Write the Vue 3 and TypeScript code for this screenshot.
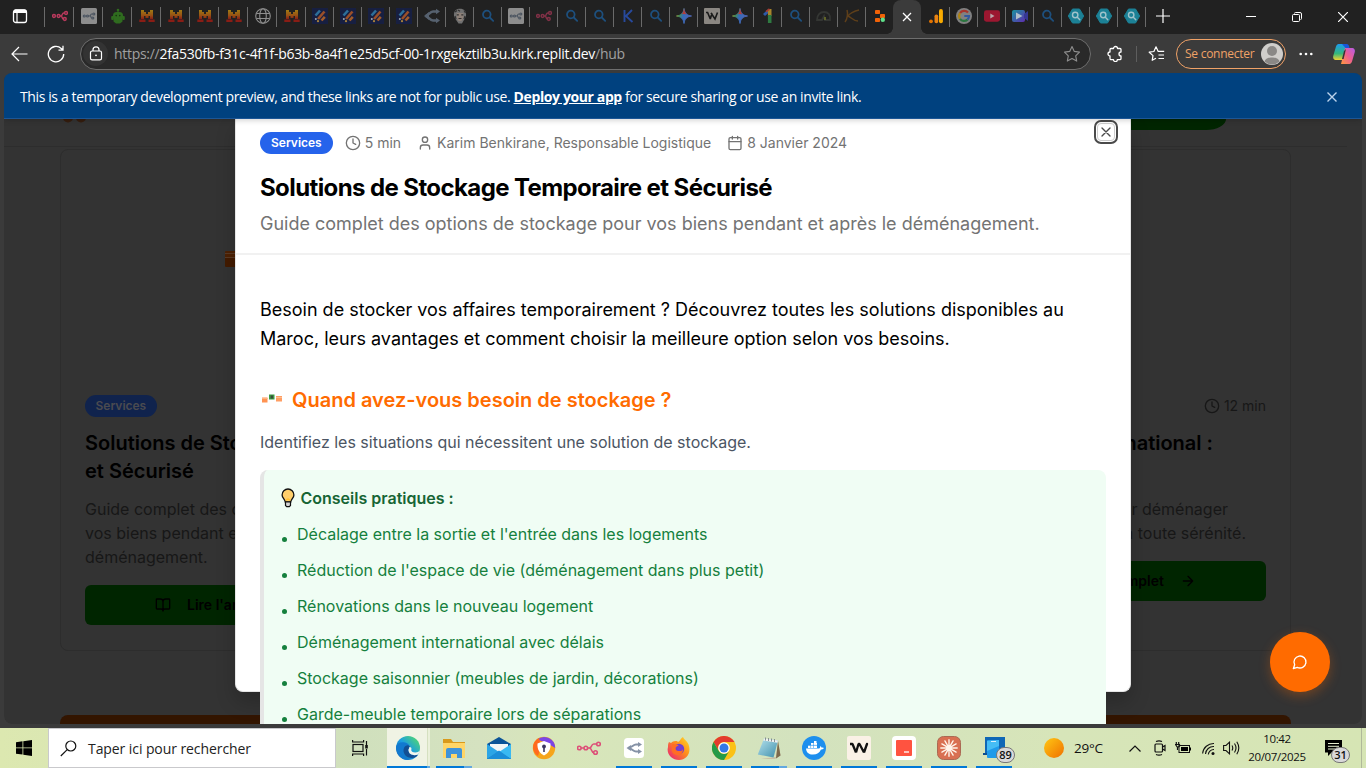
<script setup lang="ts">
interface Tab {
  icon: string
  dim?: number
  wide?: boolean
  bare?: boolean
}

const t = (icon: string, dim = 1, wide = false): Tab => ({ icon, dim, wide })

const tabsBefore: Tab[] = [
  t('n8n', 0.8, true),
  t('n8n-box', 1, true),
  t('robot', 1, true),
  t('mistral', 0.85, true),
  t('mistral', 0.85, true),
  t('mistral', 0.85, true),
  t('mistral', 0.85, true),
  t('globe', 1, true),
  t('mistral', 0.85, true),
  t('pens', 0.9),
  t('pens', 0.9),
  t('pens', 0.9),
  t('pens', 0.9),
  t('fork'),
  t('face', 0.8),
  t('search'),
  t('n8n-box'),
  t('n8n', 0.5),
  t('search'),
  t('search'),
  t('letter-k'),
  t('search'),
  t('spark', 0.8),
  t('wave-tab'),
  t('spark', 0.8),
  t('one'),
  t('search'),
  t('dome'),
  t('kimi'),
  t('replit'),
]
const tabsAfter: Tab[] = [
  { icon: 'analytics', bare: true },
  t('google', 0.8),
  t('youtube'),
  t('video', 0.85),
  t('search'),
  t('hex'),
  t('hex'),
  t('hex'),
]

const tips: string[] = [
  "Décalage entre la sortie et l'entrée dans les logements",
  "Réduction de l'espace de vie (déménagement dans plus petit)",
  'Rénovations dans le nouveau logement',
  'Déménagement international avec délais',
  'Stockage saisonnier (meubles de jardin, décorations)',
  'Garde-meuble temporaire lors de séparations',
]

interface App {
  icon: string
  open?: boolean
  multi?: boolean
  active?: boolean
  badge?: string
}
const apps: App[] = [
  { icon: 'edge', open: true, multi: true, active: true },
  { icon: 'folder', open: true, multi: true },
  { icon: 'mail' },
  { icon: 'shield' },
  { icon: 'n8n-big' },
  { icon: 'fork-app', open: true },
  { icon: 'firefox', open: true },
  { icon: 'chrome', open: true },
  { icon: 'notepad', open: true, multi: true },
  { icon: 'docker', open: true },
  { icon: 'wave-app', open: true },
  { icon: 'red-app', open: true },
  { icon: 'claude', open: true },
  { icon: 'phone', open: true, badge: '89' },
]
</script>

<template>
  <svg class="defs" width="0" height="0">
    <defs>
      <linearGradient id="g-mi" x1="0" y1="0" x2="0" y2="1">
        <stop offset="0" stop-color="#b58a12" /><stop offset=".6" stop-color="#ad5a12" /><stop offset="1" stop-color="#9c1d14" />
      </linearGradient>
      <linearGradient id="g-edge" x1="0" y1="1" x2="1" y2="0">
        <stop offset="0" stop-color="#0c59a4" /><stop offset=".5" stop-color="#1b9de2" /><stop offset="1" stop-color="#5be35a" />
      </linearGradient>
      <linearGradient id="g-ff" x1="1" y1="0" x2="0" y2="1">
        <stop offset="0" stop-color="#ffe226" /><stop offset=".45" stop-color="#ff8a1e" /><stop offset="1" stop-color="#e8177f" />
      </linearGradient>
      <linearGradient id="g-spark" x1="0" y1="0" x2="1" y2=".3">
        <stop offset="0" stop-color="#d9b52b" /><stop offset=".3" stop-color="#4fa868" /><stop offset=".55" stop-color="#3b7de0" /><stop offset="1" stop-color="#5a78d8" />
      </linearGradient>
      <linearGradient id="g-sun" x1="0" y1="0" x2="1" y2="1">
        <stop offset="0" stop-color="#ffc814" /><stop offset="1" stop-color="#f07000" />
      </linearGradient>
      <linearGradient id="g-cop1" x1="0" y1="0" x2="0" y2="1">
        <stop offset="0" stop-color="#1c9bf0" /><stop offset=".6" stop-color="#35b77a" /><stop offset="1" stop-color="#f2d233" />
      </linearGradient>
      <linearGradient id="g-cop2" x1="1" y1="0" x2="0" y2="1">
        <stop offset="0" stop-color="#b45be8" /><stop offset=".5" stop-color="#ee5f8f" /><stop offset="1" stop-color="#ff9a3c" />
      </linearGradient>
      <linearGradient id="g-video" x1="0" y1="0" x2="1" y2="1">
        <stop offset="0" stop-color="#17a9b5" /><stop offset="1" stop-color="#6a2fc9" />
      </linearGradient>
      <linearGradient id="g-note" x1="0" y1="0" x2="1" y2="1">
        <stop offset="0" stop-color="#b7e3ee" /><stop offset="1" stop-color="#3f8fab" />
      </linearGradient>
    </defs>
    <symbol id="n8n" viewBox="0 0 16 16">
      <g fill="none" stroke="#e0406c" stroke-width="1.500">
        <circle cx="2" cy="8" r="1.400" /><circle cx="6.600" cy="8" r="1.400" /><circle cx="14" cy="5" r="1.400" /><circle cx="12.800" cy="11" r="1.400" />
        <path d="M8 8h1c1.500 0 1-3 2.800-3h.8M9 8c1.400 0 .9 3 2.400 3" />
      </g>
    </symbol>
    <symbol id="n8n-box" viewBox="0 0 16 16">
      <rect width="16" height="16" rx="1.500" fill="#8d8d8d" />
      <g fill="none" stroke="#4c5561" stroke-width="1.200">
        <circle cx="3.300" cy="8" r="1" /><circle cx="6.500" cy="8" r="1" /><circle cx="12.800" cy="6" r="1" /><circle cx="11.800" cy="10" r="1" />
        <path d="M7.500 8h1c1.300 0 1-2 2.200-2h1M9 8c1.200 0 .8 2 1.800 2" />
      </g>
    </symbol>
    <symbol id="robot" viewBox="0 0 16 16">
      <g fill="#2f6b1f"><circle cx="8" cy="2" r="1.300" /><path d="M7.400 2h1.200v3H7.400z" /><rect x="3" y="4" width="10" height="8.500" rx="3.500" /><rect x="1.200" y="8" width="2.500" height="4" rx="1" /><rect x="12.300" y="8" width="2.500" height="4" rx="1" /><path d="M3.500 11h9v2.500L10 15.500H6l-2.500-2z" /></g>
      <circle cx="6.200" cy="7.600" r=".8" fill="#17300f" /><circle cx="9.800" cy="7.600" r=".8" fill="#17300f" />
    </symbol>
    <symbol id="mistral" viewBox="0 0 16 16">
      <path d="M2 2h3v2h2v2h2V4h2V2h3v9h-3V8H9.500v2h-3V8H5v3H2z" fill="url(#g-mi)" />
      <path d="M.300 11.500h6.200v2.500H.300zM9.500 11.500h6.200v2.500H9.500z" fill="#9c1d14" />
    </symbol>
    <symbol id="globe" viewBox="0 0 16 16">
      <g fill="none" stroke="#8e8e8e" stroke-width="1.100"><circle cx="8" cy="8" r="7.300" /><ellipse cx="8" cy="8" rx="3.300" ry="7.300" /><path d="M1.500 5.500h13M1.500 10.500h13" /></g>
    </symbol>
    <symbol id="pens" viewBox="0 0 16 16">
      <rect width="16" height="16" fill="#171f45" />
      <g stroke-width="2.600" stroke-linecap="butt"><path d="M3.500 7.500L8 2.500" stroke="#2f78a8" /><path d="M6 11L12.500 3.500" stroke="#a8542a" /><path d="M9.500 12.500L12.800 8.800" stroke="#b0622c" /></g>
      <circle cx="3.800" cy="11" r="1" fill="#a9b4c4" /><circle cx="6" cy="13.200" r="1.100" fill="#b98f3e" />
    </symbol>
    <symbol id="fork" viewBox="0 0 16 16">
      <path d="M14 3.500H9C6 3.500 4 8 1.500 8 4 8 6 12.500 9 12.500h5" fill="none" stroke="#56616f" stroke-width="2.600" />
      <path d="M0 8l5-4v8zM12 .8l4 2.700-4 2.700zM12 9.800l4 2.700-4 2.700z" fill="#56616f" />
    </symbol>
    <symbol id="face" viewBox="0 0 16 16">
      <path d="M2 8C1.500 3 4 .8 8 .8S14.500 3 14 8l-1.500 3L10 15.500H6.500L3.500 11z" fill="#858585" />
      <path d="M4.800 5h6.600v4.500L9.500 13h-3L4.800 9.500z" fill="#a8988e" />
      <path d="M4.800 6.800h2M9.300 6.800h2M6.500 10.500h3M3 4l2-1.500M12 2.500L13.500 5M6 2l2 1.200M3 8l1 3M13 8l-1 3" stroke="#333" stroke-width="1.200" fill="none" />
    </symbol>
    <symbol id="search" viewBox="0 0 16 16">
      <g fill="none" stroke="#1d4f7d" stroke-width="1.800" stroke-linecap="round"><circle cx="6.800" cy="6.500" r="3.800" /><path d="M9.800 9.500l3.400 3.300" /></g>
    </symbol>
    <symbol id="letter-k" viewBox="0 0 16 16">
      <path d="M4.500 2v12M12 2L6 8l6.500 6" fill="none" stroke="#27499c" stroke-width="1.900" />
    </symbol>
    <symbol id="spark" viewBox="0 0 16 16">
      <path d="M8 .500C8.500 5 11 7.500 15.500 8 11 8.500 8.500 11 8 15.500 7.500 11 5 8.500.500 8 5 7.500 7.500 5 8 .500z" fill="url(#g-spark)" stroke="url(#g-spark)" />
      <path d="M8 0C8.600 3.500 9.300 5 10.500 6.200L5.800 6C7 5 7.500 3.500 8 0z" fill="#d6453d" />
    </symbol>
    <symbol id="wave-tab" viewBox="0 0 16 16">
      <rect width="16" height="16" rx="1" fill="#8b8782" /><path d="M2 4.500h1.600L6.300 11M7 5l4 6 2.500-6.500M6.300 11L8 5" fill="none" stroke="#1a1a1a" stroke-width="1.600" />
    </symbol>
    <symbol id="one" viewBox="0 0 16 16">
      <path d="M4 7l5.500-5" stroke="#2d5aa8" stroke-width="3" /><path d="M9.700 1v7" stroke="#a8852b" stroke-width="3.600" /><path d="M9.700 7v8" stroke="#2f7a41" stroke-width="3.600" /><path d="M6 3.700L9.500 1" stroke="#a83a33" stroke-width="1.600" />
    </symbol>
    <symbol id="dome" viewBox="0 0 16 16">
      <path d="M1 12c0-5 3-8 7-8s7 3 6 8H9l-1-4-2 4z" fill="none" stroke="#343633" stroke-width="1.800" /><path d="M9 9v3" stroke="#6f7424" stroke-width="1.500" />
    </symbol>
    <symbol id="kimi" viewBox="0 0 16 16">
      <path d="M3 2c1 3 .500 9-2 12M15 2C10 3 5 6 4 8c3 1 5 5 10 5" fill="none" stroke="#5e3f1a" stroke-width="1.500" />
    </symbol>
    <symbol id="replit" viewBox="0 0 16 16">
      <g fill="#f26207"><rect x="3" y="2" width="5" height="4" rx=".8" /><rect x="8" y="6" width="5" height="4" rx=".8" /><rect x="3" y="10" width="5" height="4" rx=".8" /></g><circle cx="10.800" cy="11.800" r="2.200" fill="#5fe08a" />
    </symbol>
    <symbol id="analytics" viewBox="0 0 16 16">
      <circle cx="3" cy="13.300" r="1.900" fill="#e37400" /><rect x="6.500" y="6.500" width="3.700" height="8.700" rx="1.800" fill="#e98212" /><rect x="11" y="1" width="3.900" height="14.200" rx="1.900" fill="#f9ab00" />
    </symbol>
    <symbol id="google" viewBox="0 0 16 16">
      <circle cx="8" cy="8" r="8" fill="#999" />
      <g fill="none" stroke-width="2.200"><path d="M12 4.500A5 5 0 0 0 4 5.200" stroke="#c93a2f" /><path d="M4 5.200a5 5 0 0 0 0 5.600" stroke="#cf9c12" /><path d="M4 10.800a5 5 0 0 0 7.500.800" stroke="#2f8c48" /><path d="M11.500 11.600A5 5 0 0 0 13 8H8.300" stroke="#3568bd" /></g>
    </symbol>
    <symbol id="youtube" viewBox="0 0 16 16">
      <rect y="2.300" width="16" height="11.400" rx="2.400" fill="#9c1730" /><path d="M6.300 5.600v4.800L10.500 8z" fill="#b9a6aa" />
    </symbol>
    <symbol id="video" viewBox="0 0 16 16">
      <rect y="2" width="13" height="12" rx="2" fill="url(#g-video)" /><path d="M12 6l4-3v10l-4-3z" fill="#3b3ba8" /><path d="M4 4.500v7L10.500 8z" fill="#c9dce8" />
    </symbol>
    <symbol id="hex" viewBox="0 0 16 16">
      <path d="M4.500 1h7L15.700 8l-4.200 7h-7L.3 8z" fill="#1c8196" stroke="#1c8196" stroke-linejoin="round" /><g fill="none" stroke="#9fc3cb" stroke-width="1.400" stroke-linecap="round"><circle cx="7.200" cy="7" r="2.700" /><path d="M9.300 9.200l2.500 2.600" /></g>
    </symbol>

    <symbol id="clock" viewBox="0 0 24 24"><g fill="none" stroke="currentColor" stroke-width="2" stroke-linecap="round" stroke-linejoin="round"><circle cx="12" cy="12" r="10" /><path d="M12 6v6l4 2" /></g></symbol>
    <symbol id="user" viewBox="0 0 24 24"><g fill="none" stroke="currentColor" stroke-width="2" stroke-linecap="round" stroke-linejoin="round"><path d="M19 21v-2a4 4 0 0 0-4-4H9a4 4 0 0 0-4 4v2" /><circle cx="12" cy="7" r="4" /></g></symbol>
    <symbol id="calendar" viewBox="0 0 24 24"><g fill="none" stroke="currentColor" stroke-width="2" stroke-linecap="round" stroke-linejoin="round"><path d="M8 2v4M16 2v4M3 10h18" /><rect x="3" y="4" width="18" height="18" rx="2" /></g></symbol>
    <symbol id="book" viewBox="0 0 24 24"><g fill="none" stroke="currentColor" stroke-width="2" stroke-linecap="round" stroke-linejoin="round"><path d="M12 7v14M3 18a1 1 0 0 1-1-1V4a1 1 0 0 1 1-1h5a4 4 0 0 1 4 4 4 4 0 0 1 4-4h5a1 1 0 0 1 1 1v13a1 1 0 0 1-1 1h-6a3 3 0 0 0-3 3 3 3 0 0 0-3-3z" /></g></symbol>
    <symbol id="arrow" viewBox="0 0 24 24"><path d="M5 12h14M12 5l7 7-7 7" fill="none" stroke="currentColor" stroke-width="2" stroke-linecap="round" stroke-linejoin="round" /></symbol>
    <symbol id="cross" viewBox="0 0 24 24"><path d="M18 6L6 18M6 6l12 12" fill="none" stroke="currentColor" stroke-width="2" stroke-linecap="round" /></symbol>
    <symbol id="chat" viewBox="0 0 24 24"><path d="M7.900 20A9 9 0 1 0 4 16.100L2 22z" fill="none" stroke="currentColor" stroke-width="2" stroke-linecap="round" stroke-linejoin="round" /></symbol>

    <symbol id="edge" viewBox="0 0 24 24">
      <circle cx="12" cy="12" r="12" fill="url(#g-edge)" />
      <path d="M.100 11C1 7 5 5.500 9 6.500c4 1 5.500 4 4.500 6.500-2-2-6-1-6 3 0 4 3 7 6.500 7.800C6 25 0 19 .100 11z" fill="#1279cf" />
      <path d="M8 12c-2 5 2 10 8 10 3 0 5-1.500 6-3.500-4 1.500-9 .500-9.500-4C12.300 12.500 14 12 13.500 10 12 8.500 9 9.500 8 12z" fill="#124f94" />
      <path d="M12.500 14.500c-.500-1 1-2 .800-3.500 2 0 2.500 1 2 2.500-.500 2 1.500 3 4 3 2 0 3.500-.800 4.500-2-.400 2-1 3.200-1.800 4-4 1.500-9 .500-9.500-4z" fill="#f2f7ee" />
    </symbol>
    <symbol id="folder" viewBox="0 0 24 24">
      <path d="M1 3h8l2 3h12v16H1z" fill="#d99a1c" /><path d="M1 7h22v15H1z" fill="#ffd567" /><path d="M4 22v-8a2 2 0 0 1 2-2h12a2 2 0 0 1 2 2v8h-5v-4H9v4z" fill="#3f93d9" />
    </symbol>
    <symbol id="mail" viewBox="0 0 24 24">
      <path d="M0 8l12-7 12 7v15H0z" fill="#0a5398" /><path d="M3 8h18v9H3z" fill="#f1f5f7" /><path d="M0 8l12 8-12 7z" fill="#2ba5e6" /><path d="M24 8l-12 8 12 7z" fill="#39b9f2" /><path d="M0 23l12-8.500L24 23z" fill="#1b8ed8" />
    </symbol>
    <symbol id="shield" viewBox="0 0 24 24">
      <circle cx="12" cy="12" r="11.200" fill="#f6a51b" /><path d="M5 3.500A11.200 11.200 0 0 1 23.200 12L15 7z" fill="#7b45e6" /><path d="M1 12a11 11 0 0 1 6-10l2 8-3 10a11 11 0 0 1-5-8z" fill="#ff6a1f" /><path d="M12 5l6.500 2.500c.5 6-2 9.500-6.500 12-4.500-2.500-7-6-6.500-12z" fill="#fff" /><circle cx="12" cy="10.500" r="1.900" fill="#3b3660" /><path d="M11.200 11h1.600v5h-1.600z" fill="#3b3660" />
    </symbol>
    <symbol id="n8n-big" viewBox="0 0 24 24">
      <g fill="none" stroke="#dd5078" stroke-width="1.600"><circle cx="2.300" cy="12" r="1.800" /><circle cx="8.800" cy="12" r="1.800" /><circle cx="21.500" cy="8" r="1.800" /><circle cx="18.500" cy="16.500" r="1.800" /><path d="M4 12h3M10.600 12h1.700c3 0 1.500-4 4.500-4h3M12.300 12c3 0 1.500 4.500 4.500 4.500" /></g>
    </symbol>
    <symbol id="fork-app" viewBox="0 0 24 24">
      <rect x="2" y="2" width="20" height="20" rx="3.500" fill="#fff" /><path d="M17 8.500h-3c-3 0-4 3.500-8 3.500 4 0 5 3.500 8 3.500h3" fill="none" stroke="#8592a6" stroke-width="2" /><path d="M4.500 12L9 9v6zM16 6l4 2.500L16 11zM16 13l4 2.500-4 2.500z" fill="#8592a6" />
    </symbol>
    <symbol id="firefox" viewBox="0 0 24 24">
      <path d="M2 6l2 1c2-2 4-2 6-2l1 1c2-1 3-4 5-5 1 3 5 4 6 9 2 8-3 14-10 14S-1 18 1 11c0-2 0-3 1-5z" fill="url(#g-ff)" /><circle cx="12" cy="13" r="5.200" fill="#6c3fd2" /><path d="M5 8c2 0 5 0 7 2-3 0-4 2-3 4 2 2 5 1 7-1 0 5-3 7-6 6-4 0-6-4-5-7z" fill="#ff6d24" /><circle cx="13" cy="12.300" r="2.800" fill="#763fd0" />
    </symbol>
    <symbol id="chrome" viewBox="0 0 24 24">
      <circle cx="12" cy="12" r="12" fill="#fbc116" /><path d="M1.600 6A12 12 0 0 1 22.400 6H12a6 6 0 0 0-5.200 9z" fill="#e33b2e" /><path d="M1.600 6A12 12 0 0 0 12 24l5.200-9A6 6 0 0 1 6.800 15z" fill="#249a48" /><circle cx="12" cy="12" r="5.800" fill="#fff" /><circle cx="12" cy="12" r="4.500" fill="#3478e5" />
    </symbol>
    <symbol id="notepad" viewBox="0 0 24 24">
      <path d="M21 5l2.500 14.500L18 23H4l15-2z" fill="#c8bfa4" /><path d="M21 5l2.500 14.500L19 22.500z" fill="#7c6a4c" /><path d="M7 2.500l14 2-4.500 17L.800 18.500z" fill="url(#g-note)" /><path d="M7 2.500l14 2-.600 2.200L6.200 4.500z" fill="#f0f2f0" /><path d="M8.500 1.500v3M11.500 2v3M14.500 2.500v3M17.500 3v3" stroke="#707a80" stroke-width=".8" />
    </symbol>
    <symbol id="docker" viewBox="0 0 24 24">
      <circle cx="12" cy="12" r="12" fill="#1d8fee" /><path d="M4 12.500h13c1 0 1.300-1 1-2.500 1 .5 1.500 1 1.700 1.700 1-.2 1.800 0 2.300.4-.8 1.200-2 1.500-3 1.500-1.500 3.300-4 5-8 5-4.500 0-6.800-2.500-7-6.100z" fill="#fff" /><path d="M6 9.500h9v2.500H6zM9 7h6v2.200H9zM12 5h2.500v2H12z" fill="#fff" /><path d="M8.600 9.500v2.500M11.500 7v5M6 9.300h9" stroke="#1d8fee" stroke-width=".5" />
    </symbol>
    <symbol id="wave-app" viewBox="0 0 24 24">
      <rect width="24" height="24" rx="2" fill="#faf1e6" /><path d="M3 8h2.500L9 16.500M9 16.500L11.500 8h1L17 16.500M17 16.500l2.800-8" fill="none" stroke="#111" stroke-width="2.300" stroke-linejoin="bevel" /><circle cx="20" cy="8" r="1.200" fill="#111" />
    </symbol>
    <symbol id="red-app" viewBox="0 0 24 24">
      <rect width="24" height="24" rx="4" fill="#fff" /><rect x="4" y="4" width="16" height="16" rx="1" fill="#ff5340" /><path d="M12 16h5" stroke="#fff" stroke-width="1.300" />
    </symbol>
    <symbol id="claude" viewBox="0 0 24 24">
      <rect x=".5" y=".5" width="23" height="23" rx="6" fill="#d97052" stroke="#aa6a54" /><g stroke="#fff4ea" stroke-width="1.400" stroke-linecap="round"><path d="M12 3.800v16.400M3.800 12h16.400M7.900 4.900l8.200 14.200M16.100 4.900L7.900 19.100M4.900 7.900l14.200 8.200M4.900 16.100l14.200-8.200" /></g>
    </symbol>
    <symbol id="phone" viewBox="0 0 24 24">
      <path d="M3 1h20v18H3z" fill="#0f67b6" /><path d="M1 17h9v2H1z" fill="#0e4e8e" /><rect x="5" y="4" width="12" height="18" rx="1" fill="#1f9bea" /><path d="M5 5l12-1v6L5 15z" fill="#45bdf5" /><path d="M9 5.500h5" stroke="#d9f0fc" />
    </symbol>
  </svg>

  <div class="screen">
    <header class="tabstrip">
      <div class="workspace">
        <svg width="16" height="16" viewBox="0 0 16 16"><rect x="1.500" y="2" width="13" height="12.500" rx="2.300" fill="none" stroke="#fff" stroke-width="1.300" /><path d="M1.500 3.500a2 2 0 0 1 2-2h9a2 2 0 0 1 2 2V5h-13z" fill="#fff" /><path d="M5 5v9.500" stroke="#fff" stroke-width="1.200" /></svg>
      </div>
      <div v-for="(tab, i) in tabsBefore" :key="'b' + i" class="tab" :class="{ wide: tab.wide }">
        <svg width="16" height="16" :style="{ opacity: tab.dim }"><use :href="'#' + tab.icon" /></svg>
      </div>
      <div class="tab-active">
        <svg width="10" height="10" viewBox="0 0 10 10"><path d="M1 1l8 8M9 1L1 9" stroke="#fff" stroke-width="1.300" /></svg>
      </div>
      <div v-for="(tab, i) in tabsAfter" :key="'a' + i" class="tab" :class="{ bare: tab.bare }">
        <svg width="16" height="16" :style="{ opacity: tab.dim }"><use :href="'#' + tab.icon" /></svg>
      </div>
      <div class="newtab">
        <svg width="14" height="14" viewBox="0 0 14 14"><path d="M7 0v14M0 7h14" stroke="#fff" stroke-width="1.200" /></svg>
      </div>
      <div class="winctl">
        <svg width="10" height="10" viewBox="0 0 10 10"><path d="M0 4.500h10" stroke="#fff" /></svg>
        <svg width="10" height="10" viewBox="0 0 10 10" fill="none" stroke="#fff"><rect x=".5" y="2.500" width="7" height="7" rx="1" /><path d="M2.500 1.500q0-1 1-1h4.500q1.500 0 1.500 1.500v4.500q0 1-1 1" /></svg>
        <svg width="10" height="10" viewBox="0 0 10 10"><path d="M0 0l10 10M10 0L0 10" stroke="#fff" stroke-width="1.200" /></svg>
      </div>
    </header>

    <div class="toolbar">
      <svg class="back" width="17" height="16" viewBox="0 0 17 16" fill="none" stroke="#fff" stroke-width="1.200"><path d="M16.500 8H1M8 1L1 8l7 7" /></svg>
      <svg class="reload" width="18" height="18" viewBox="0 0 18 18" fill="none" stroke="#fff" stroke-width="1.300"><path d="M16.700 9A7.700 7.700 0 1 1 14.200 3.400L16 5M16 .800V5.200h-4.500" /></svg>
      <div class="address">
        <span class="lock"><svg width="14" height="15" viewBox="0 0 14 15" fill="none" stroke="#fff" stroke-width="1.200"><rect x="1.500" y="5" width="11" height="8.800" rx="1.600" /><path d="M4 5V3.800a3 3 0 0 1 6 0V5" /><circle cx="7" cy="9.300" r=".9" fill="#fff" stroke="none" /></svg></span>
        <span class="url"><i>https://</i>2fa530fb-f31c-4f1f-b63b-8a4f1e25d5cf-00-1rxgekztilb3u.kirk.replit.dev<i>/hub</i></span>
        <svg class="star" width="18" height="18" viewBox="0 0 18 18" fill="none" stroke="#8e8e8e" stroke-width="1.100" stroke-linejoin="round"><path d="M9 1.500l2.300 4.900 5.200.700-3.800 3.700 1 5.300L9 13.500l-4.700 2.600 1-5.300L1.500 7.100l5.200-.700z" /></svg>
      </div>
      <svg class="ext" width="17" height="17" viewBox="0 0 17 17" fill="none" stroke="#fff" stroke-width="1.300" stroke-linejoin="round"><path d="M3 4.500a1 1 0 0 1 1-1h2.500a2 2 0 1 1 4 0H13a1 1 0 0 1 1 1V7a1.900 1.900 0 0 0 0 4v2.500a1.200 1.200 0 0 1-1.200 1.200h-2.500a1.900 1.900 0 0 1-3.800 0H4.200A1.200 1.200 0 0 1 3 13.500V11a2 2 0 1 1 0-4z" /></svg>
      <i class="vline"></i>
      <svg class="favs" width="17" height="17" viewBox="0 0 17 17" fill="none" stroke="#fff" stroke-width="1.200" stroke-linejoin="round"><path d="M8 13.300L4.200 15.300l.8-4.700L1.200 7.200l4.700-.7L8 1.800l2.200 4.600h6M10.500 10H16M10.500 13.500H16" /></svg>
      <div class="signin"><span>Se connecter</span>
        <svg width="22" height="22" viewBox="0 0 22 22"><circle cx="11" cy="11" r="11" fill="#d0cecb" /><circle cx="11" cy="8" r="5" fill="#8a8886" /><path d="M3.500 18.500C4.500 15 8 14.500 11 14.500s6.500.5 7.500 4A11 11 0 0 1 3.500 18.500z" fill="#8a8886" /></svg>
      </div>
      <svg class="dots" width="14" height="4" viewBox="0 0 14 4" fill="#fff"><circle cx="1.700" cy="2" r="1.300" /><circle cx="7" cy="2" r="1.300" /><circle cx="12.300" cy="2" r="1.300" /></svg>
      <svg class="copilot" width="24" height="22" viewBox="0 0 24 22"><path d="M6.500 1H15l-4 16H4.500C1.500 17 .500 15 1.500 12L4 3.500C4.500 2 5.500 1 6.500 1z" fill="url(#g-cop1)" /><path d="M10 1h4.500c2 0 2.500 1.500 3 4h-4z" fill="#1a56d8" /><path d="M17.500 21H9l4-16h6.500c3 0 4 2 3 5L20 18.500c-.5 1.500-1.500 2.500-2.500 2.500z" fill="url(#g-cop2)" /><path d="M14 6l-2.400 10H10l2-8z" fill="#333" /></svg>
    </div>

    <div class="viewport">
      <div class="banner">
        <p>This is a temporary development preview, and these links are not for public use. <a>Deploy your app</a> for secure sharing or use an invite link.</p>
        <svg width="10" height="10" viewBox="0 0 10 10"><path d="M.500 .500l9 9M9.500.500l-9 9" stroke="#bcd3ec" stroke-width="1.400" /></svg>
      </div>

      <div class="page">
        <div class="site">
          <div class="site-head"><svg width="28" height="4" viewBox="0 0 28 4" fill="#351d0e"><circle cx="8" cy="-1.500" r="5" /><circle cx="21" cy="-1.500" r="5" /></svg><span class="site-cta"></span></div>
          <div class="cards">
            <article class="card first">
              <div class="thumb"><i class="crate"></i></div>
              <div class="card-top"><span class="badge dimmed">Services</span></div>
              <h2><span>Solutions de Sto</span><span>et Sécurisé</span></h2>
              <p><span>Guide complet des o</span><span>vos biens pendant e</span><span>déménagement.</span></p>
              <div class="read"><svg width="16" height="16"><use href="#book" /></svg><span>Lire l'ar</span></div>
            </article>
            <article class="card third">
              <div class="thumb"></div>
              <div class="card-top end"><svg width="16" height="16"><use href="#clock" /></svg><span>12 min</span></div>
              <h2>national :</h2>
              <p><span class="line-a">r déménager</span><span class="line-b">n toute sérénité.</span></p>
              <div class="read"><span>mplet</span><svg width="16" height="16"><use href="#arrow" /></svg></div>
            </article>
          </div>
          <div class="site-band"></div>
        </div>

        <section class="modal">
          <div class="modal-head">
            <div class="meta">
              <span class="badge">Services</span>
              <span class="m time"><svg width="16" height="16"><use href="#clock" /></svg><span>5 min</span></span>
              <span class="m author"><svg width="16" height="16"><use href="#user" /></svg><span>Karim Benkirane, Responsable Logistique</span></span>
              <span class="m"><svg width="16" height="16"><use href="#calendar" /></svg><span>8 Janvier 2024</span></span>
            </div>
            <h1>Solutions de Stockage Temporaire et Sécurisé</h1>
            <p class="lead">Guide complet des options de stockage pour vos biens pendant et après le déménagement.</p>
          </div>
          <p class="intro">Besoin de stocker vos affaires temporairement ? Découvrez toutes les solutions disponibles au Maroc, leurs avantages et comment choisir la meilleure option selon vos besoins.</p>
          <h3>
            <svg width="24" height="24" viewBox="0 0 24 24"><rect x="2" y="9.500" width="5.500" height="5" fill="#ff9352" /><path d="M2 10.500h5.500" stroke="#ffb382" /><rect x="9" y="6.500" width="5.500" height="5" fill="#3c9a42" /><rect x="10.700" y="7.500" width="2.300" height="3" fill="#3b4b3b" /><rect x="16" y="8" width="6" height="5.500" fill="#ff9e63" /><path d="M16 9.500h6" stroke="#ffbd92" /></svg>
            <span>Quand avez-vous besoin de stockage ?</span>
          </h3>
          <p class="text">Identifiez les situations qui nécessitent une solution de stockage.</p>
          <div class="tips">
            <h4><svg width="14" height="20" viewBox="0 0 14 20"><path d="M7 1a5.900 5.900 0 0 0-5.900 5.900c0 3 2.900 4.100 3.200 7.100h5.400c.300-3 3.200-4.100 3.200-7.100A5.900 5.900 0 0 0 7 1z" fill="#ffcf6b" stroke="#111" stroke-width="1.300" /><path d="M4.500 14h5v3.500l-1.200 1.200H5.700L4.500 17.500z" fill="#d5d5d5" stroke="#111" stroke-width="1.200" /><path d="M5 12.500Q7 9.500 9 12.500" stroke="#ffbf2e" fill="none" stroke-width="1.300" /></svg>Conseils pratiques :</h4>
            <ul><li v-for="tip in tips" :key="tip">{{ tip }}</li></ul>
          </div>
          <div class="close"><svg width="16" height="16"><use href="#cross" /></svg></div>
        </section>
        <div class="chat"><svg width="16" height="16"><use href="#chat" /></svg></div>
      </div>
    </div>

    <footer class="taskbar">
      <div class="start"><svg width="16" height="16" viewBox="0 0 16 16"><path d="M0 2.200L6.500 1.300v6.200H0zM7.300 1.200L16 0v7.500H7.300zM0 8.300h6.500v6.200L0 13.700zM7.300 8.300H16V16l-8.700-1.300z" /></svg></div>
      <div class="find">
        <svg width="17" height="17" viewBox="0 0 17 17" fill="none" stroke="#111" stroke-width="1.200"><circle cx="10.800" cy="6" r="5" /><path d="M7.200 9.600L.800 16" /></svg>
        <span>Taper ici pour rechercher</span>
      </div>
      <div class="taskview"><svg width="17" height="16" viewBox="0 0 17 16" fill="none" stroke="#111" stroke-width="1.200"><rect x="1" y="4.500" width="10" height="7" /><path d="M.6 0v2h11V0M.6 16v-2h11v2M14.500 1v4M14.500 9v6.500" /><path d="M14.500 5v3.500" stroke-width="2.600" /></svg></div>
      <div class="apps">
        <div v-for="app in apps" :key="app.icon" class="app" :class="{ open: app.open, multi: app.multi, active: app.active }">
          <svg width="24" height="24"><use :href="'#' + app.icon" /></svg>
          <b v-if="app.badge" class="count">{{ app.badge }}</b>
        </div>
      </div>
      <div class="weather"><svg width="20" height="20" viewBox="0 0 20 20"><circle cx="10" cy="10" r="10" fill="url(#g-sun)" /></svg><span>29°C</span></div>
      <div class="tray">
        <svg class="chev" width="12" height="7" viewBox="0 0 12 7" fill="none" stroke="#111" stroke-width="1.200"><path d="M.5 6.500L6 1l5.500 5.500" /></svg>
        <svg class="cam" width="12" height="16" viewBox="0 0 12 16" fill="none" stroke="#111" stroke-width="1.200"><rect x="1" y="4" width="7.500" height="8" rx="1" /><path d="M8.500 7L11 5.500v5L8.500 9M2 1.500Q5 .200 8 1.500M2 14.500Q5 15.800 8 14.500" /></svg>
        <svg class="batt" width="16" height="12" viewBox="0 0 16 12"><rect x="4" y="3.500" width="10.500" height="7" fill="none" stroke="#111" /><path d="M6 5h7v4H6zM14.500 5.500H16v3h-1.500z" /><path d="M1.300 0v2M3.700 0v2M.500 2.500h4v1.700L2.500 5.500z M2.500 5.500V8" fill="none" stroke="#111" stroke-width="1.200" /></svg>
        <svg class="wifi" width="13" height="13" viewBox="0 0 13 13" fill="none" stroke="#111" stroke-width="1.100"><path d="M.600 11.500A11 11 0 0 1 12 1.500M3.500 12A8 8 0 0 1 12 4.500M6.300 12.500A5.500 5.500 0 0 1 12 7.500" /><circle cx="11" cy="11.500" r="1.500" fill="#111" stroke="none" /></svg>
        <svg class="snd" width="17" height="14" viewBox="0 0 17 14" fill="none" stroke="#111" stroke-width="1.100"><path d="M.600 4.500H3L6.500 1.200v11.600L3 9.500H.600zM9 4.500q1.500 2.500 0 5M11.500 2.500q3 4.500 0 9M13.800 .800q4 6.200 0 12.400" /></svg>
      </div>
      <div class="clock"><span class="hour">10:42</span><span class="date">20/07/2025</span></div>
      <div class="notif"><svg width="17" height="16" viewBox="0 0 17 16"><path d="M0 0h17v12.500H6.500L3 16v-3.500H0z" /><path d="M3 3.500h11M3 6.300h11M3 9h7" stroke="#e5edcf" /></svg><b class="count">31</b></div>
      <i class="peek"></i>
    </footer>
  </div>
</template>

<style>
body { background: #3b3b3b; }
</style>

<style scoped>
.defs { position: absolute; }
.screen { width: 1366px; height: 768px; overflow: hidden; display: flex; flex-direction: column; background: #3b3b3b; font-family: "Open Sans", "Noto Sans", sans-serif; }
.screen svg { display: block; flex: none; }
h1, h2, h3, h4, p, ul { margin: 0; padding: 0; }
i { font-style: normal; }

.tabstrip { height: 34px; flex: none; background: #212121; display: flex; align-items: stretch; }
.workspace { width: 44px; box-sizing: border-box; padding: 8px 0 0 12px; }
.tab { width: 28px; box-sizing: border-box; position: relative; display: flex; align-items: center; justify-content: center; padding: 0 0 2px 2px; }
.tab::before { content: ""; position: absolute; left: 0; top: 7px; height: 20px; width: 1px; background: #6a6a6a; }
.tab.wide { width: 29px; }
.tab.bare::before { display: none; }
.tab-active { width: 28px; background: #3b3b3b; border-radius: 8px 8px 0 0; display: flex; align-items: center; justify-content: center; position: relative; }
.tab-active::before, .tab-active::after { content: ""; position: absolute; bottom: 0; width: 6px; height: 6px; }
.tab-active::before { left: -6px; background: radial-gradient(circle at 0 0, #212121 5.500px, #3b3b3b 6px); }
.tab-active::after { right: -6px; background: radial-gradient(circle at 100% 0, #212121 5.500px, #3b3b3b 6px); }
.newtab { width: 36px; box-sizing: border-box; padding: 9px 0 0 11px; position: relative; }
.newtab::before { content: ""; position: absolute; left: 0; top: 7px; height: 20px; width: 1px; background: #6a6a6a; }
.winctl { margin-left: auto; display: flex; gap: 36px; padding: 12px 18px 0 0; }

.toolbar { height: 39px; flex: none; display: flex; align-items: center; }
.back { margin: 0 0 0 11px; }
.reload { margin-left: 19px; }
.address { margin-left: 15px; width: 1011px; height: 32px; box-sizing: border-box; border: 1px solid #6e6e6e; border-radius: 16px; background: #292929; display: flex; align-items: center; }
.lock { margin-left: 2px; width: 25px; height: 25px; border-radius: 50%; background: #333; display: flex; align-items: center; justify-content: center; }
.url { margin-left: 6px; font-size: 14px; letter-spacing: -0.288px; color: #fff; white-space: nowrap; }
.url i { color: #a0a0a0; }
.star { margin-left: auto; margin-right: 9px; }
.ext { margin-left: 16px; }
.vline { width: 1px; height: 16px; background: #5e5e5e; margin-left: 12px; }
.favs { margin-left: 11px; }
.signin { margin-left: 11px; width: 110px; height: 30px; box-sizing: border-box; border: 1px solid #f0a267; border-radius: 15px; display: flex; align-items: center; justify-content: space-between; padding: 0 2px 0 8px; color: #f0a267; font-size: 12px; letter-spacing: -0.260px; white-space: nowrap; }
.dots { margin-left: 13px; }
.copilot { margin-left: 19px; }

.viewport { height: 651px; flex: none; margin: 0 4px; overflow: hidden; border-radius: 8px; display: flex; flex-direction: column; }
.banner { height: 46px; flex: none; box-sizing: border-box; background: #00417f; border-bottom: 1px solid #1c5696; color: #fff; font-size: 14px; font-weight: 500; display: flex; align-items: center; justify-content: space-between; padding: 2px 25px 0 16px; position: relative; z-index: 3; box-shadow: 0 1px 6px rgba(0, 0, 0, 0.200); }
.banner p { white-space: nowrap; letter-spacing: -0.385px; }
.banner a { font-weight: 700; text-decoration: underline; }
.page { flex: 1; position: relative; background: #333; font-family: Inter, "Liberation Sans", sans-serif; overflow: hidden; border-radius: 0 0 8px 8px; }

.site { padding: 0 71px 0 56px; color: #000; }
.site-head { height: 28px; box-sizing: border-box; display: flex; justify-content: space-between; align-items: flex-start; border-bottom: 1px solid #2d2d2d; margin: 0 -56px; padding-left: 56px; padding-right: 49px; }
.site-cta { width: 160px; height: 11px; background: #002500; border-radius: 0 0 20px 20px / 0 0 11px 11px; margin-right: 72px; }
.cards { display: grid; grid-template-columns: 389px 389px; justify-content: space-between; margin-top: 2px; height: 502px; }
.card { box-sizing: border-box; border: 1px solid #2d2d2d; border-radius: 8px; height: 502px; padding: 0 24px; display: flex; flex-direction: column; }
.thumb { height: 244px; flex: none; }
.crate { display: block; width: 16px; height: 16px; margin: 101px 0 0 140px; border-radius: 1px; background: linear-gradient(#4d2103 0 2px, #5a3a25 2px 3px, #4d2103 3px 6px, #5a3a25 6px 7px, #431b01 7px); }
.card-top { height: 24px; display: flex; align-items: center; }
.card-top.end { justify-content: flex-end; gap: 4px; font-size: 14px; color: #171717; }
.card-top.end span { margin-bottom: 2px; }
.badge { box-sizing: border-box; height: 22px; padding: 0 11px; border-radius: 11px; background: #2563eb; color: #fff; font-size: 12px; font-weight: 600; line-height: 22px; }
.badge.dimmed { background: #10234d; color: #4b4b50; padding: 0 10.500px; }
h2 { margin-top: 11px; font-size: 20px; font-weight: 600; line-height: 28px; height: 56px; }
h2 span { display: block; white-space: nowrap; }
.card p { margin-top: 12px; font-size: 16px; line-height: 24px; color: #171717; }
.card p span { display: block; white-space: nowrap; }
.read { margin-top: 16px; height: 40px; flex: none; background: #002500; border-radius: 6px; display: flex; align-items: center; font-size: 14px; font-weight: 600; }
.read span { margin-bottom: 2px; }
.first .read { padding-left: 70px; gap: 16px; }
.third h2 { text-align: right; padding-right: 53px; }
.third p { text-align: right; }
.card .line-a { padding-right: 38px; }
.card .line-b { padding-right: 20px; }
.third .read { justify-content: flex-end; gap: 16px; padding-right: 70px; }
.site-band { margin-top: 64px; height: 30px; background: #331500; border-radius: 8px 8px 0 0; }

.modal { position: absolute; left: 231px; top: 0; width: 896px; height: 572.500px; box-sizing: border-box; border: 1px solid #e5e5e5; border-top: 0; border-radius: 0 0 8px 8px; background: #fff; color: #000; box-shadow: 0 10px 20px rgba(0, 0, 0, 0.200); padding: 12px 24px 0; z-index: 1; }
.modal-head { margin: 0 -24px; padding: 0 24px; height: 122px; border-bottom: 2px solid #f1f1f1; }
.meta { display: flex; align-items: center; height: 24px; font-size: 14px; color: #737373; white-space: nowrap; }
.m { display: flex; align-items: center; gap: 4px; }
.m span { margin-bottom: 2px; }
.time { margin-left: 12px; }
.author { margin: 0 16px; }
h1 { margin-top: 21px; font-size: 24px; line-height: 24px; font-weight: 700; letter-spacing: -0.600px; }
.lead { margin-top: 10px; font-size: 18px; line-height: 28px; color: #737373; }
.intro { margin-top: 40px; font-size: 18px; line-height: 29px; }
h3 { margin-top: 33px; height: 28px; display: flex; align-items: center; gap: 8px; color: #ff6b00; font-size: 20px; font-weight: 600; }
.text { margin-top: 15px; font-size: 16px; line-height: 26px; color: #4b5563; }
.tips { margin-top: 15px; height: 300px; border-left: 4px solid #e5e5e5; background: #f0fdf4; border-radius: 8px; padding: 16px 16px 0 17px; }
h4 { display: flex; align-items: center; gap: 5.500px; height: 24px; color: #166534; font-size: 16px; font-weight: 600; }
ul { list-style: none; margin-top: 12px; display: flex; flex-direction: column; gap: 12px; }
li { display: flex; align-items: center; height: 24px; font-size: 16px; color: #15803d; white-space: nowrap; }
li::before { content: ""; width: 5px; height: 5px; border-radius: 50%; background: #15803d; margin: 10px 10px 0 1px; }
.close { position: absolute; right: 12px; top: 1px; width: 24px; height: 24px; box-sizing: border-box; border: 2px solid #4a4a4a; border-radius: 7px; display: flex; align-items: center; justify-content: center; color: #4a4a4a; }
.close::before { content: ""; position: absolute; inset: 1px; border: 1px solid #ccc; border-radius: 4px; }
.chat { position: absolute; right: 32px; bottom: 32px; width: 60px; height: 60px; border-radius: 50%; background: #ff6b00; color: #fff; box-shadow: 0 4px 12px rgba(255, 107, 0, 0.300); display: flex; align-items: center; justify-content: center; }

.taskbar { height: 40px; margin-top: 4px; flex: none; background: linear-gradient(90deg, #dce8b0 0, #dbe7b2 50px, #d0e0bd 360px, #d5e2c0 480px, #d8e6ba 560px, #d3e2be 800px, #d7e5b9 1060px, #d6e5b4 1366px); display: flex; color: #111; position: relative; }
.start { width: 48px; display: flex; align-items: center; justify-content: center; }
.find { width: 288px; box-sizing: border-box; background: #fff; border: 1px solid #c9c9cc; display: flex; align-items: center; padding-left: 11px; gap: 11px; font-size: 14px; letter-spacing: -0.080px; color: #222; }
.taskview { width: 51px; display: flex; align-items: center; padding-left: 16px; box-sizing: border-box; }
.apps { display: flex; }
.app { width: 36px; margin-right: 9px; position: relative; display: flex; align-items: center; justify-content: center; }
.app.open::after { content: ""; position: absolute; left: 0; right: 0; bottom: 0; height: 2px; background: #0078d7; }
.app.multi::after { background: linear-gradient(90deg, #0078d7 28px, #62a8e0 28px); }
.app.active { width: 43px; margin-right: 6px; padding-right: 2px; box-sizing: border-box; background: linear-gradient(90deg, #f0f3e4 40px, #d5e0c0 40px, #d5e0c0 41px, #eaf0da 41px); }
.app.active::after { background: linear-gradient(90deg, #0078d7 40px, #62a8e0 40px); }
.count { position: absolute; left: 20px; top: 19px; height: 16px; width: 19px; box-sizing: border-box; border: 1px solid #777; border-radius: 8px; background: #d9d9d9; color: #111; font-size: 11px; font-weight: 600; line-height: 14px; text-align: center; }
.weather { display: flex; align-items: center; gap: 10px; margin-left: 23px; font-size: 13.500px; letter-spacing: -0.200px; width: 85px; flex: none; }
.tray { display: flex; align-items: center; width: 111px; flex: none; }
.cam { margin-left: 13px; }
.batt { margin-left: 9px; }
.wifi { margin-left: 11px; }
.snd { margin-left: 8px; }
.clock { width: 60px; margin-left: 7px; flex: none; display: flex; flex-direction: column; align-items: center; justify-content: center; font-size: 11.500px; line-height: 18px; white-space: nowrap; letter-spacing: -0.350px; padding-bottom: 1px; }
.notif { position: absolute; left: 1325px; top: 12px; }
.notif .count { left: 6px; top: 7px; }
.peek { position: absolute; right: 4px; top: 0; width: 1px; height: 40px; background: #b0b99a; }
</style>
